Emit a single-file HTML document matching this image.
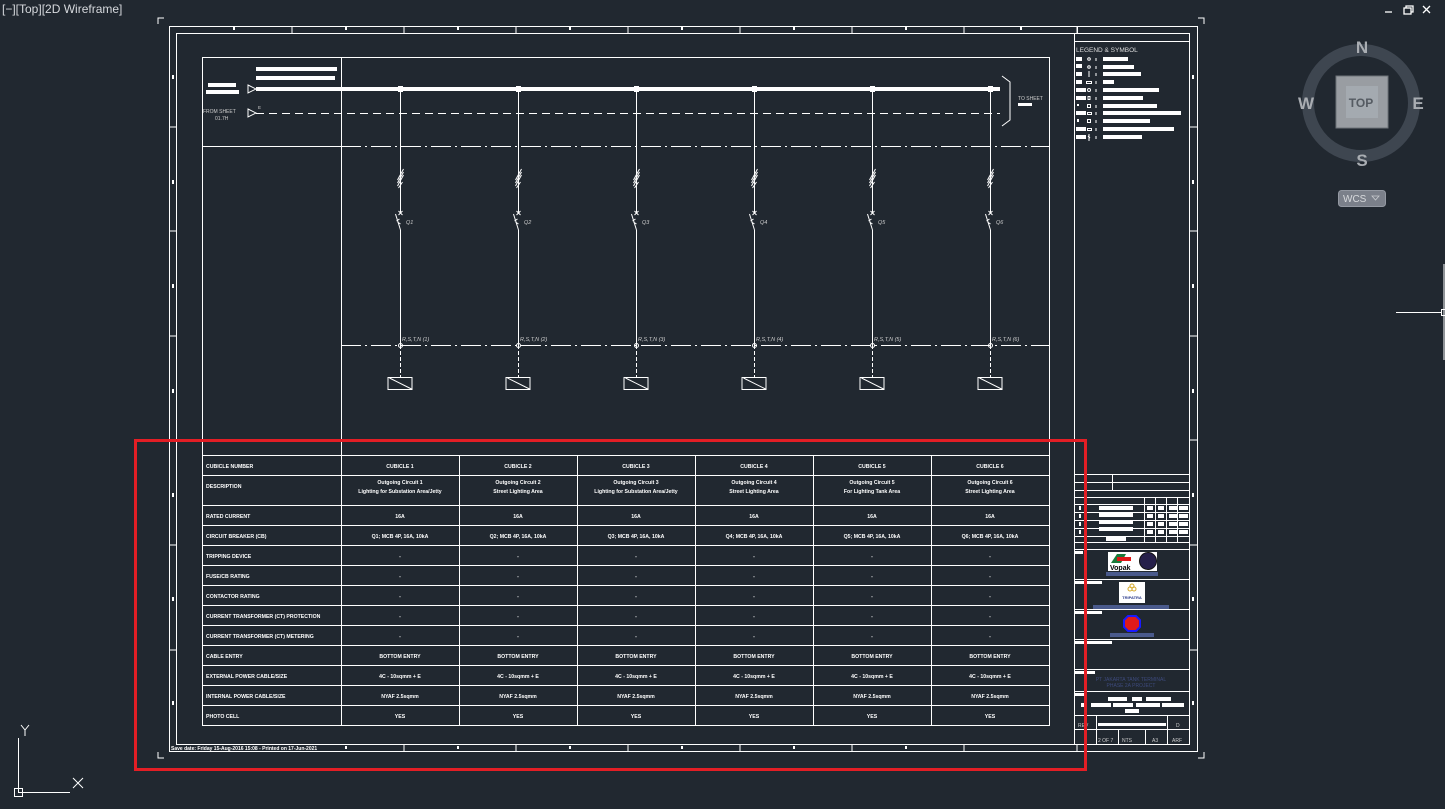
<!DOCTYPE html>
<html><head><meta charset="utf-8"><style>
html,body{margin:0;padding:0;background:#212830;width:1445px;height:809px;overflow:hidden}
svg{display:block}
text{font-family:"Liberation Sans",sans-serif}
.t{font-size:5.2px;font-weight:bold;fill:#fff}
.c{text-anchor:middle}
</style></head><body>
<svg width="1445" height="809" viewBox="0 0 1445 809" xmlns="http://www.w3.org/2000/svg">
<rect width="1445" height="809" fill="#212830"/>
<text x="2" y="13" font-size="12" fill="#d6d9dd">[−][Top][2D Wireframe]</text>
<g stroke="#fff" fill="none" stroke-width="1.3">
<line x1="1385" y1="12" x2="1392" y2="12"/>
<rect x="1404" y="8" width="7" height="6"/><path d="M1406 8V6h7v6h-2"/>
<path d="M1423 6l7 7M1430 6l-7 7"/>
</g>
<g stroke="#fff" fill="none" stroke-width="1">
<path d="M158 24V18h6"/><path d="M1198 18h6v6"/><path d="M158 752v6h6"/><path d="M1198 758h6v-6"/>
</g>
<g stroke="#fff" fill="none" stroke-width="1">
<rect x="169.5" y="26.5" width="1028" height="725"/>
<rect x="176.5" y="33.5" width="1013" height="711"/>
<line x1="292" y1="26" x2="292" y2="33"/><line x1="404" y1="26" x2="404" y2="33"/><line x1="516" y1="26" x2="516" y2="33"/>
<line x1="628" y1="26" x2="628" y2="33"/><line x1="740" y1="26" x2="740" y2="33"/><line x1="852" y1="26" x2="852" y2="33"/><line x1="964" y1="26" x2="964" y2="33"/><line x1="1077" y1="26" x2="1077" y2="33"/>
<line x1="169" y1="127" x2="176" y2="127"/><line x1="169" y1="231" x2="176" y2="231"/><line x1="169" y1="336" x2="176" y2="336"/><line x1="169" y1="440" x2="176" y2="440"/><line x1="169" y1="545" x2="176" y2="545"/><line x1="169" y1="650" x2="176" y2="650"/>
<line x1="1189" y1="127" x2="1197" y2="127"/><line x1="1189" y1="231" x2="1197" y2="231"/><line x1="1189" y1="336" x2="1197" y2="336"/><line x1="1189" y1="440" x2="1197" y2="440"/><line x1="1189" y1="545" x2="1197" y2="545"/><line x1="1189" y1="650" x2="1197" y2="650"/>
<line x1="404" y1="744" x2="404" y2="751"/><line x1="516" y1="744" x2="516" y2="751"/><line x1="628" y1="744" x2="628" y2="751"/><line x1="740" y1="744" x2="740" y2="751"/><line x1="852" y1="744" x2="852" y2="751"/><line x1="964" y1="744" x2="964" y2="751"/><line x1="1077" y1="744" x2="1077" y2="751"/>
</g>
<g fill="#fff">
<rect x="233" y="27" width="2" height="3"/><rect x="345" y="27" width="2" height="3"/><rect x="457" y="27" width="2" height="3"/><rect x="569" y="27" width="2" height="3"/><rect x="681" y="27" width="2" height="3"/><rect x="793" y="27" width="2" height="3"/><rect x="905" y="27" width="2" height="3"/><rect x="1020" y="27" width="2" height="3"/>
<rect x="172" y="75" width="2" height="4"/><rect x="172" y="180" width="2" height="4"/><rect x="172" y="284" width="2" height="4"/><rect x="172" y="389" width="2" height="4"/><rect x="172" y="493" width="2" height="4"/><rect x="172" y="597" width="2" height="4"/><rect x="172" y="701" width="2" height="4"/>
<rect x="1192" y="75" width="2" height="4"/><rect x="1192" y="180" width="2" height="4"/><rect x="1192" y="284" width="2" height="4"/><rect x="1192" y="389" width="2" height="4"/><rect x="1192" y="493" width="2" height="4"/><rect x="1192" y="597" width="2" height="4"/><rect x="1192" y="701" width="2" height="4"/>
<rect x="345" y="746" width="2" height="3"/><rect x="457" y="746" width="2" height="3"/><rect x="569" y="746" width="2" height="3"/><rect x="681" y="746" width="2" height="3"/><rect x="793" y="746" width="2" height="3"/><rect x="905" y="746" width="2" height="3"/>
</g>
<text x="171" y="750" font-size="5" font-weight="bold" fill="#fff">Save date: Friday 15-Aug-2016 15:08 - Printed on 17-Jun-2021</text>
<g stroke="#fff" fill="none" stroke-width="1">
<rect x="202.5" y="57.5" width="847" height="668"/>
<line x1="341.5" y1="57" x2="341.5" y2="455"/>
<line x1="202" y1="146.5" x2="341" y2="146.5"/>
<line x1="341" y1="146.5" x2="1049" y2="146.5" stroke-dasharray="20,4,2,4"/>
<line x1="341" y1="345.5" x2="1049" y2="345.5" stroke-dasharray="20,4,2,4"/>
<line x1="256" y1="113.5" x2="1000" y2="113.5" stroke-dasharray="8,5"/>
<path d="M248 85l8 4-8 4z M248 109l8 4-8 4z"/>
<path d="M1002 76l8 6v38l-8 6"/>
</g>
<rect x="256" y="87" width="744" height="4" fill="#fff"/>
<g fill="#fff">
<rect x="256" y="67" width="81" height="4"/><rect x="256" y="76" width="79" height="4"/>
<rect x="208" y="83" width="28" height="4"/><rect x="206" y="90" width="33" height="4"/>
<rect x="1018" y="103" width="14" height="3"/>
</g>
<text x="203" y="113" font-size="5" fill="#ccc">FROM SHEET</text>
<text x="215" y="120" font-size="5" fill="#ccc">01.7H</text>
<text x="258" y="109" font-size="4.5" fill="#ccc">E</text>
<text x="1018" y="100" font-size="5" fill="#ccc">TO SHEET</text>
<defs>
<g id="fd" stroke="#fff" fill="none" stroke-width="1">
<line x1="0" y1="89" x2="0" y2="213"/>
<line x1="0" y1="230" x2="0" y2="345"/>
<line x1="0" y1="345" x2="0" y2="377" stroke-dasharray="4,2"/>
<path d="M-3 186l6-11M-3 183l6-11M-3 180l6-11M-2 188l4-6"/>
<path d="M-2 211l4 4M2 211l-4 4"/>
<path d="M-5 214l5 16M-4 221l3-2M-3 222l3 2"/>
<circle cx="0" cy="345.5" r="2"/>
<rect x="-12.5" y="377.5" width="24" height="12"/>
<line x1="-11" y1="378" x2="11" y2="389"/>
</g>
</defs>
<g fill="#fff">
<rect x="398" y="86" width="5" height="6"/><rect x="516" y="86" width="5" height="6"/><rect x="634" y="86" width="5" height="6"/><rect x="752" y="86" width="5" height="6"/><rect x="870" y="86" width="5" height="6"/><rect x="988" y="86" width="5" height="6"/>
</g>
<use href="#fd" x="400.5"/><use href="#fd" x="518.5"/><use href="#fd" x="636.5"/><use href="#fd" x="754.5"/><use href="#fd" x="872.5"/><use href="#fd" x="990.5"/>
<g font-size="5.5" font-style="italic" fill="#ccc">
<text x="406" y="224">Q1</text><text x="524" y="224">Q2</text><text x="642" y="224">Q3</text><text x="760" y="224">Q4</text><text x="878" y="224">Q5</text><text x="996" y="224">Q6</text>
<text x="402" y="341">R,S,T,N (1)</text><text x="520" y="341">R,S,T,N (2)</text><text x="638" y="341">R,S,T,N (3)</text><text x="756" y="341">R,S,T,N (4)</text><text x="874" y="341">R,S,T,N (5)</text><text x="992" y="341">R,S,T,N (6)</text>
</g>
<g stroke="#fff" stroke-width="1" fill="none">
<line x1="202" y1="455.5" x2="1049" y2="455.5"/><line x1="202" y1="475.5" x2="1049" y2="475.5"/><line x1="202" y1="505.5" x2="1049" y2="505.5"/>
<line x1="202" y1="525.5" x2="1049" y2="525.5"/><line x1="202" y1="545.5" x2="1049" y2="545.5"/><line x1="202" y1="565.5" x2="1049" y2="565.5"/>
<line x1="202" y1="585.5" x2="1049" y2="585.5"/><line x1="202" y1="605.5" x2="1049" y2="605.5"/><line x1="202" y1="625.5" x2="1049" y2="625.5"/>
<line x1="202" y1="645.5" x2="1049" y2="645.5"/><line x1="202" y1="665.5" x2="1049" y2="665.5"/><line x1="202" y1="685.5" x2="1049" y2="685.5"/><line x1="202" y1="705.5" x2="1049" y2="705.5"/>
<line x1="341.5" y1="455" x2="341.5" y2="725"/><line x1="459.5" y1="455" x2="459.5" y2="725"/><line x1="577.5" y1="455" x2="577.5" y2="725"/><line x1="695.5" y1="455" x2="695.5" y2="725"/><line x1="813.5" y1="455" x2="813.5" y2="725"/><line x1="931.5" y1="455" x2="931.5" y2="725"/>
</g>
<g class="t">
<text x="206" y="468">CUBICLE NUMBER</text><text x="206" y="488">DESCRIPTION</text><text x="206" y="518">RATED CURRENT</text>
<text x="206" y="538">CIRCUIT BREAKER (CB)</text><text x="206" y="558">TRIPPING DEVICE</text><text x="206" y="578">FUSE/CB RATING</text>
<text x="206" y="598">CONTACTOR RATING</text><text x="206" y="618">CURRENT TRANSFORMER (CT) PROTECTION</text><text x="206" y="638">CURRENT TRANSFORMER (CT) METERING</text>
<text x="206" y="658">CABLE ENTRY</text><text x="206" y="678">EXTERNAL POWER CABLE/SIZE</text><text x="206" y="698">INTERNAL POWER CABLE/SIZE</text><text x="206" y="718">PHOTO CELL</text>
</g>
<g class="t c">
<text x="400" y="468">CUBICLE 1</text><text x="518" y="468">CUBICLE 2</text><text x="636" y="468">CUBICLE 3</text><text x="754" y="468">CUBICLE 4</text><text x="872" y="468">CUBICLE 5</text><text x="990" y="468">CUBICLE 6</text>
<text x="400" y="484">Outgoing Circuit 1</text><text x="518" y="484">Outgoing Circuit 2</text><text x="636" y="484">Outgoing Circuit 3</text><text x="754" y="484">Outgoing Circuit 4</text><text x="872" y="484">Outgoing Circuit 5</text><text x="990" y="484">Outgoing Circuit 6</text>
<text x="400" y="493">Lighting for Substation Area/Jetty</text><text x="518" y="493">Street Lighting Area</text><text x="636" y="493">Lighting for Substation Area/Jetty</text><text x="754" y="493">Street Lighting Area</text><text x="872" y="493">For Lighting Tank Area</text><text x="990" y="493">Street Lighting Area</text>
<text x="400" y="518">16A</text><text x="518" y="518">16A</text><text x="636" y="518">16A</text><text x="754" y="518">16A</text><text x="872" y="518">16A</text><text x="990" y="518">16A</text>
<text x="400" y="538">Q1; MCB 4P, 16A, 10kA</text><text x="518" y="538">Q2; MCB 4P, 16A, 10kA</text><text x="636" y="538">Q3; MCB 4P, 16A, 10kA</text><text x="754" y="538">Q4; MCB 4P, 16A, 10kA</text><text x="872" y="538">Q5; MCB 4P, 16A, 10kA</text><text x="990" y="538">Q6; MCB 4P, 16A, 10kA</text>
<text x="400" y="558">-</text><text x="518" y="558">-</text><text x="636" y="558">-</text><text x="754" y="558">-</text><text x="872" y="558">-</text><text x="990" y="558">-</text>
<text x="400" y="578">-</text><text x="518" y="578">-</text><text x="636" y="578">-</text><text x="754" y="578">-</text><text x="872" y="578">-</text><text x="990" y="578">-</text>
<text x="400" y="598">-</text><text x="518" y="598">-</text><text x="636" y="598">-</text><text x="754" y="598">-</text><text x="872" y="598">-</text><text x="990" y="598">-</text>
<text x="400" y="618">-</text><text x="518" y="618">-</text><text x="636" y="618">-</text><text x="754" y="618">-</text><text x="872" y="618">-</text><text x="990" y="618">-</text>
<text x="400" y="638">-</text><text x="518" y="638">-</text><text x="636" y="638">-</text><text x="754" y="638">-</text><text x="872" y="638">-</text><text x="990" y="638">-</text>
<text x="400" y="658">BOTTOM ENTRY</text><text x="518" y="658">BOTTOM ENTRY</text><text x="636" y="658">BOTTOM ENTRY</text><text x="754" y="658">BOTTOM ENTRY</text><text x="872" y="658">BOTTOM ENTRY</text><text x="990" y="658">BOTTOM ENTRY</text>
<text x="400" y="678">4C - 10sqmm + E</text><text x="518" y="678">4C - 10sqmm + E</text><text x="636" y="678">4C - 10sqmm + E</text><text x="754" y="678">4C - 10sqmm + E</text><text x="872" y="678">4C - 10sqmm + E</text><text x="990" y="678">4C - 10sqmm + E</text>
<text x="400" y="698">NYAF 2.5sqmm</text><text x="518" y="698">NYAF 2.5sqmm</text><text x="636" y="698">NYAF 2.5sqmm</text><text x="754" y="698">NYAF 2.5sqmm</text><text x="872" y="698">NYAF 2.5sqmm</text><text x="990" y="698">NYAF 2.5sqmm</text>
<text x="400" y="718">YES</text><text x="518" y="718">YES</text><text x="636" y="718">YES</text><text x="754" y="718">YES</text><text x="872" y="718">YES</text><text x="990" y="718">YES</text>
</g>
<g stroke="#fff" fill="none" stroke-width="1">
<line x1="1074.5" y1="33" x2="1074.5" y2="744"/>
<line x1="1077.5" y1="26" x2="1077.5" y2="33"/>
<line x1="1074" y1="41.5" x2="1189" y2="41.5"/>
<line x1="1074" y1="474.5" x2="1189" y2="474.5"/><line x1="1074" y1="482.5" x2="1189" y2="482.5"/><line x1="1074" y1="490.5" x2="1189" y2="490.5"/>
<line x1="1074" y1="497.5" x2="1189" y2="497.5"/><line x1="1074" y1="504.5" x2="1189" y2="504.5"/><line x1="1074" y1="512.5" x2="1189" y2="512.5"/>
<line x1="1074" y1="520.5" x2="1189" y2="520.5"/><line x1="1074" y1="528.5" x2="1189" y2="528.5"/><line x1="1074" y1="536.5" x2="1189" y2="536.5"/>
<line x1="1074" y1="542.5" x2="1189" y2="542.5"/><line x1="1074" y1="549.5" x2="1189" y2="549.5"/>
<line x1="1074" y1="579.5" x2="1189" y2="579.5"/><line x1="1074" y1="609.5" x2="1189" y2="609.5"/><line x1="1074" y1="639.5" x2="1189" y2="639.5"/>
<line x1="1074" y1="669.5" x2="1189" y2="669.5"/><line x1="1074" y1="691.5" x2="1189" y2="691.5"/><line x1="1074" y1="715.5" x2="1189" y2="715.5"/><line x1="1074" y1="729.5" x2="1189" y2="729.5"/>
<line x1="1112.5" y1="474" x2="1112.5" y2="490"/>
<line x1="1144.5" y1="497" x2="1144.5" y2="542"/><line x1="1155.5" y1="497" x2="1155.5" y2="542"/><line x1="1166.5" y1="497" x2="1166.5" y2="542"/><line x1="1177.5" y1="497" x2="1177.5" y2="542"/>
<line x1="1096.5" y1="715" x2="1096.5" y2="744"/><line x1="1167.5" y1="715" x2="1167.5" y2="744"/>
<line x1="1118.5" y1="729" x2="1118.5" y2="744"/><line x1="1145.5" y1="729" x2="1145.5" y2="744"/>
</g>
<g fill="#fff">
<rect x="1079" y="506" width="2" height="4"/><rect x="1079" y="514" width="2" height="4"/><rect x="1079" y="522" width="2" height="4"/><rect x="1079" y="530" width="2" height="4"/>
<rect x="1099" y="506" width="34" height="4"/><rect x="1099" y="513" width="34" height="4"/><rect x="1099" y="520" width="34" height="4"/><rect x="1099" y="527" width="34" height="4"/><rect x="1106" y="537" width="20" height="4"/>
<rect x="1147" y="506" width="6" height="4"/><rect x="1158" y="506" width="6" height="4"/><rect x="1169" y="506" width="8" height="4"/><rect x="1179" y="506" width="9" height="4"/>
<rect x="1147" y="514" width="6" height="4"/><rect x="1158" y="514" width="6" height="4"/><rect x="1169" y="514" width="8" height="4"/><rect x="1179" y="514" width="9" height="4"/>
<rect x="1147" y="522" width="6" height="4"/><rect x="1158" y="522" width="6" height="4"/><rect x="1169" y="522" width="8" height="4"/><rect x="1179" y="522" width="9" height="4"/>
<rect x="1147" y="530" width="6" height="4"/><rect x="1158" y="530" width="6" height="4"/><rect x="1169" y="530" width="8" height="4"/><rect x="1179" y="530" width="9" height="4"/>
<rect x="1074" y="551" width="9" height="3"/><rect x="1074" y="581" width="28" height="3"/><rect x="1074" y="611" width="28" height="3"/><rect x="1074" y="641" width="38" height="3"/><rect x="1074" y="671" width="21" height="3"/><rect x="1074" y="693" width="12" height="3"/>
<rect x="1108" y="697" width="19" height="4"/><rect x="1132" y="697" width="10" height="4"/><rect x="1146" y="697" width="25" height="4"/>
<rect x="1081" y="703" width="5" height="4"/><rect x="1091" y="703" width="20" height="4"/><rect x="1113" y="703" width="20" height="4"/><rect x="1136" y="703" width="24" height="4"/><rect x="1162" y="703" width="22" height="4"/>
<rect x="1125" y="709" width="14" height="4"/>
<rect x="1098" y="723" width="68" height="3"/>
</g>
<g font-size="5" fill="#ccc">
<text x="1078" y="727">REV</text><text x="1176" y="727">D</text>
<text x="1098" y="742">2 OF 7</text><text x="1122" y="742">NTS</text><text x="1152" y="742">A3</text><text x="1172" y="742">ARF</text>
</g>
<g font-size="5" fill="#3d4a7c" text-anchor="middle">
<text x="1131" y="681">PT JAKARTA TANK TERMINAL</text><text x="1131" y="687">PHASE 2A PROJECT</text>
</g>
<rect x="1108" y="552" width="49" height="19" fill="#fff"/>
<path d="M1111 563l6-9h9l-5 9z" fill="#1a7a3a"/><rect x="1117" y="557" width="14" height="4" fill="#e01818"/>
<text x="1110" y="570" font-size="7" font-weight="bold" fill="#000">Vopak</text>
<circle cx="1148" cy="561" r="8.5" fill="#26204a" stroke="#111"/>
<rect x="1106" y="572" width="52" height="4" fill="#4a5a8c"/>
<rect x="1119" y="582" width="26" height="21" fill="#fff"/>
<g fill="none" stroke="#d4a92a" stroke-width="1"><circle cx="1132" cy="586" r="2"/><circle cx="1130" cy="589" r="2"/><circle cx="1134" cy="589" r="2"/></g>
<text x="1132" y="599" font-size="4" font-weight="bold" fill="#2a3a8a" text-anchor="middle">TRIPATRA</text>
<rect x="1093" y="605" width="76" height="4" fill="#4a5a8c"/>
<polygon points="1128,616 1136,616 1140,620 1140,627 1136,631 1128,631 1124,627 1124,620" fill="#e01a1a" stroke="#1a1aff" stroke-width="2"/>
<rect x="1110" y="633" width="44" height="4" fill="#4a5a8c"/>
<text x="1076" y="52" font-size="6.5" fill="#ddd">LEGEND &amp; SYMBOL</text>
<g fill="#fff">
<rect x="1076" y="57" width="6" height="4"/><rect x="1103" y="57" width="25" height="4"/>
<rect x="1076" y="64" width="6" height="4"/><rect x="1103" y="65" width="31" height="4"/>
<rect x="1076" y="72" width="6" height="4"/><rect x="1103" y="72" width="38" height="4"/>
<rect x="1076" y="80" width="6" height="4"/><rect x="1103" y="80" width="11" height="4"/>
<rect x="1076" y="88" width="10" height="4"/><rect x="1103" y="88" width="56" height="4"/>
<rect x="1076" y="96" width="10" height="4"/><rect x="1103" y="96" width="40" height="4"/>
<rect x="1077" y="104" width="2" height="2"/><rect x="1103" y="104" width="54" height="4"/>
<rect x="1076" y="111" width="10" height="4"/><rect x="1103" y="111" width="78" height="4"/>
<rect x="1077" y="119" width="2" height="3"/><rect x="1103" y="119" width="47" height="4"/>
<rect x="1076" y="127" width="10" height="4"/><rect x="1103" y="127" width="71" height="4"/>
<rect x="1076" y="135" width="10" height="4"/><rect x="1103" y="135" width="39" height="4"/>
</g>
<g stroke="#fff" fill="none" stroke-width="1">
<path d="M1096 58v3M1096 66v3M1096 73v3M1096 81v3M1096 89v3M1096 97v3M1096 105v3M1096 112v3M1096 120v3M1096 128v3M1096 136v3"/>
<circle cx="1089" cy="59" r="1.3"/><circle cx="1089" cy="67" r="1.3"/><path d="M1089 71v6"/><rect x="1086.5" y="81.5" width="5" height="2"/>
<circle cx="1089" cy="90" r="1.5"/><rect x="1088" y="96.5" width="2" height="3"/><rect x="1087.5" y="104.5" width="3" height="3"/><rect x="1087.5" y="112.5" width="4" height="2"/>
<rect x="1087.5" y="119.5" width="3" height="3"/><rect x="1087.5" y="128.5" width="4" height="2"/><path d="M1089 134v7M1088 136l2 2"/>
</g>
<rect x="135.5" y="440.5" width="950" height="329" fill="none" stroke="#e31e25" stroke-width="3"/>
<circle cx="1361" cy="103" r="53" fill="none" stroke="#3e4650" stroke-width="12"/>
<rect x="1336" y="76" width="52" height="52" fill="#999da2" stroke="#6d7278"/>
<rect x="1346" y="86" width="32" height="32" fill="#a4aab0"/>
<text x="1361" y="107" font-size="12" font-weight="bold" fill="#555b62" text-anchor="middle">TOP</text>
<g font-size="17" font-weight="bold" fill="#a9adb2" text-anchor="middle">
<text x="1362" y="53">N</text><text x="1362" y="166">S</text><text x="1306" y="109">W</text><text x="1418" y="109">E</text>
</g>
<rect x="1338.5" y="190.5" width="47" height="16" rx="3" fill="#7b808a" stroke="#9499a2"/>
<text x="1343" y="202" font-size="10" fill="#d8dadd">WCS</text>
<path d="M1372 196h7l-3.5 4z" fill="none" stroke="#c8cace" stroke-width="0.8"/>
<g stroke="#fff" fill="none" stroke-width="1">
<line x1="1396" y1="312.5" x2="1441" y2="312.5"/><rect x="1441.5" y="309.5" width="4" height="6"/><line x1="1444" y1="264" x2="1444" y2="360"/>
</g>
<g stroke="#fff" fill="none" stroke-width="1">
<path d="M18.5 738V792.5H70"/><rect x="14.5" y="788.5" width="8" height="8"/>
<path d="M21 725l4 5 4-5M25 730v6"/><path d="M73 778l10 10M83 778l-10 10"/>
</g>
</svg>
</body></html>
